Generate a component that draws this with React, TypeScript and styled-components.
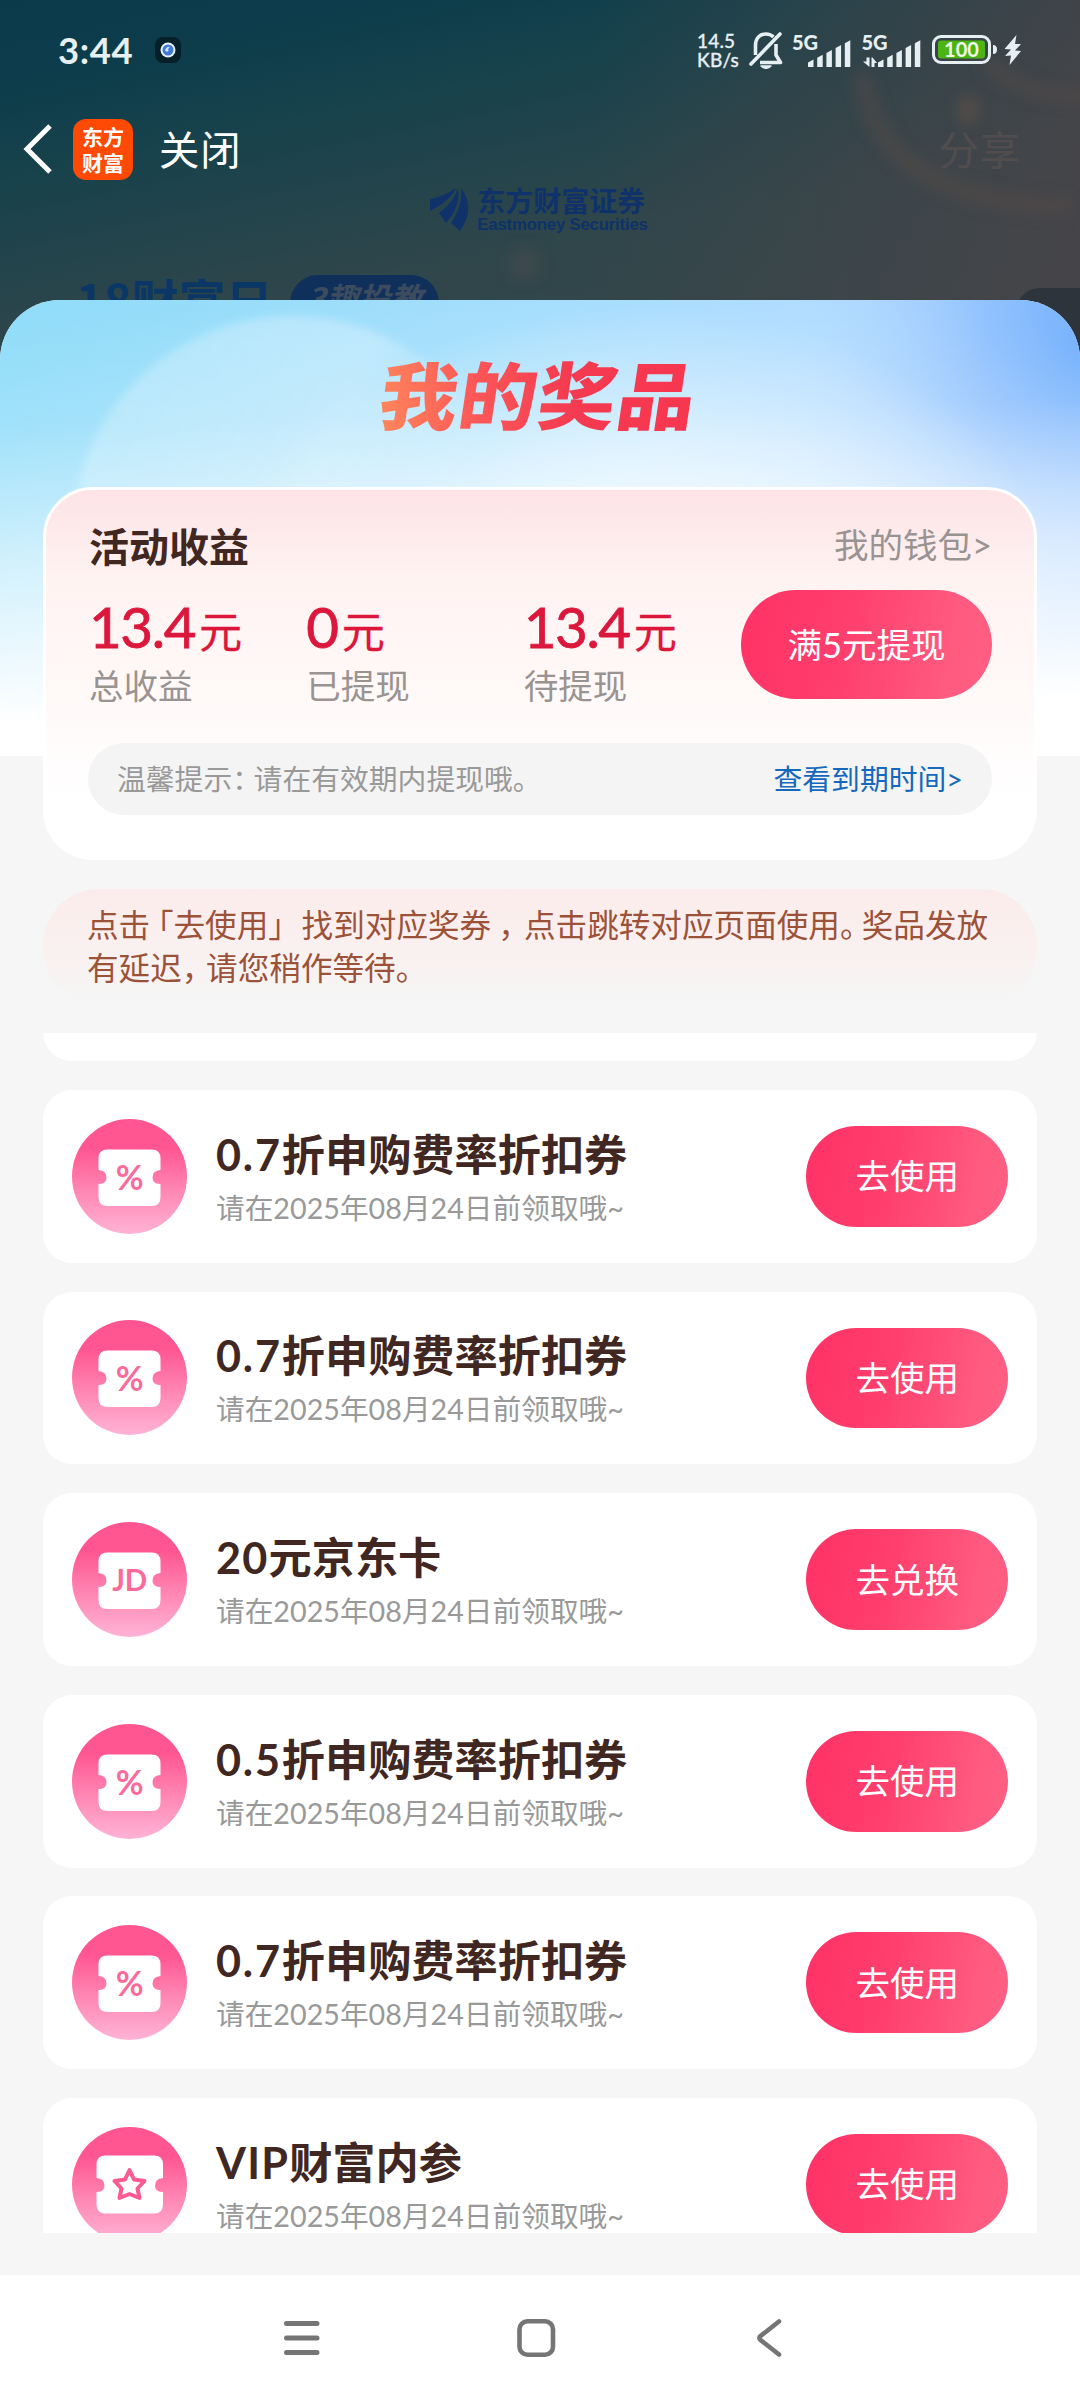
import React from 'react';
import styled, { createGlobalStyle } from 'styled-components';

const Global = createGlobalStyle`
  * { box-sizing: border-box; }
  body { margin: 0; background: #fff; }
`;

const Screen = styled.div`
  width: 1080px;
  height: 2400px;
  display: flex;
  flex-direction: column;
  overflow: hidden;
  font-family: Lato, 'Noto Sans CJK SC', sans-serif;
  background: #f6f6f6;
`;

/* ---------- dimmed page behind the sheet ---------- */

const Backdrop = styled.header`
  position: relative;
  height: 364px;
  flex: none;
  overflow: hidden;
  background:
    linear-gradient(90deg, rgba(75, 68, 72, 0) 55%, rgba(75, 68, 72, 0.75) 100%),
    linear-gradient(168deg, #0b3b4b 0%, #0d3d4b 15%, #17424c 30%, #24444b 46%, #2f464b 60%, #39464a 100%);
`;

const Swirl = styled.svg`
  position: absolute;
  inset: 0;
`;

const StatusBar = styled.div`
  position: relative;
  display: flex;
  align-items: center;
  justify-content: space-between;
  height: 100px;
  padding: 0 58px 0 58px;
  color: #e6eff2;
`;

const Group = styled.div<{ $gap: number }>`
  display: flex;
  align-items: center;
  gap: ${(p) => p.$gap}px;
`;

const Clock = styled.span`
  font-size: 36.5px;
  line-height: 40px;
  font-weight: 700;
  letter-spacing: 0.6px;
`;

const Recorder = styled.span`
  display: flex;
  align-items: center;
  justify-content: center;
  width: 26px;
  height: 26px;
  border-radius: 8px;
  background: #06202a;
`;

const TitleBar = styled.div`
  position: relative;
  display: flex;
  align-items: center;
  height: 84px;
  margin-top: 7px;
  padding: 0 59px 0 21px;
`;

const AppLogo = styled.div`
  display: flex;
  flex-direction: column;
  align-items: center;
  justify-content: center;
  width: 60px;
  height: 61px;
  margin: 0 26px 0 20px;
  border-radius: 13px;
  background: #fe4a05;
  color: #fff;
  font: 700 21px/26px 'Noto Sans CJK SC', sans-serif;
`;

const BarText = styled.span<{ $faint?: boolean }>`
  font-size: 40.3px;
  line-height: 56px;
  letter-spacing: 1px;
  padding-top: 2px;
  color: ${(p) => (p.$faint ? '#514d4f' : '#fff')};
  margin-left: ${(p) => (p.$faint ? 'auto' : '0')};
`;

const Brand = styled.div`
  position: relative;
  display: flex;
  justify-content: center;
  align-items: center;
  gap: 8px;
  height: 46px;
  margin-top: -5px;
  padding-right: 3px;
  color: #0e3269;
`;

const BrandName = styled.div`
  display: flex;
  flex-direction: column;
  font: 700 28px/31px 'Noto Sans CJK SC', sans-serif;
`;

const BrandLatin = styled.span`
  font: 700 16.8px/17px 'Liberation Sans', Arial, sans-serif;
  letter-spacing: -0.2px;
`;

const Promo = styled.div`
  position: relative;
  display: flex;
  align-items: flex-start;
  gap: 22px;
  margin-top: 41px;
  padding-left: 76px;
`;

const PromoTitle = styled.span`
  width: 192px;
  font: 700 47px/52px 'Noto Sans CJK SC', sans-serif;
  white-space: nowrap;
  color: #0a3766;
`;

const PromoPill = styled.span`
  width: 149px;
  height: 56px;
  margin-top: 2px;
  border-radius: 28px;
  background: #10305c;
  color: #3c4c5e;
  text-align: center;
  font: italic 700 32px/45px 'Noto Sans CJK SC', sans-serif;
`;

const SideTab = styled.span`
  position: absolute;
  right: 0;
  top: 288px;
  width: 64px;
  height: 90px;
  border-radius: 24px 0 0 0;
  background: #2d343c;
`;

/* ---------- sheet ---------- */

const Sheet = styled.main`
  position: relative;
  display: flex;
  flex-direction: column;
  height: 1975px;
  margin-top: -64px;
  flex: none;
  padding: 0 43px;
  border-radius: 60px 60px 0 0;
  overflow: hidden;
  background: #f6f6f6;
`;

const Sky = styled.svg`
  position: absolute;
  left: 0;
  top: 0;
`;

const SheetTitle = styled.h1`
  position: relative;
  align-self: center;
  margin: 40px 1px 0 0;
  height: 104px;
  font: 900 78px/104px 'Noto Sans CJK SC', sans-serif;
  letter-spacing: 1.2px;
  transform: scaleY(0.94) skewX(-8deg);
  background: linear-gradient(75deg, #ff8a5c 0%, #fb5657 32%, #f43a50 60%, #f8364f 100%);
  -webkit-background-clip: text;
  background-clip: text;
  color: transparent;
`;

const Earnings = styled.section`
  position: relative;
  flex: none;
  height: 373px;
  margin-top: 43px;
  padding: 13px 42px 0;
  border: 3px solid #fff;
  border-radius: 50px;
  background: linear-gradient(180deg, #fde3e6 0%, #fff3f2 25%, #fff8f7 52%, #fffdfd 75%, #fff 86%);
`;

const EarningsHead = styled.div`
  display: flex;
  justify-content: space-between;
  align-items: center;
  height: 84px;
  padding-left: 1px;
`;

const Heading = styled.h2`
  margin: 0;
  font-size: 40px;
  font-weight: 700;
  color: #412722;
`;

const Muted = styled.span`
  font-size: 34.5px;
  line-height: 46px;
  color: #999391;
`;

const Stats = styled.div`
  display: flex;
  height: 153px;
  margin-top: 3px;
  padding-left: 1px;
`;

const Stat = styled.div`
  display: flex;
  flex-direction: column;
  width: 217.6px;
`;

const Amount = styled.div`
  font-size: 56.5px;
  line-height: 72px;
  height: 73px;
  color: #dc173c;
  letter-spacing: -1.4px;
  white-space: nowrap;
  -webkit-text-stroke: 0.8px #dc173c;
  small {
    margin-left: 4px;
    font-size: 43.2px;
    font-weight: 400;
    -webkit-text-stroke: 0.3px #dc173c;
  }
`;

const PillButton = styled.button<{ $w: number; $h: number }>`
  display: flex;
  align-items: center;
  justify-content: center;
  flex: none;
  width: ${(p) => p.$w}px;
  height: ${(p) => p.$h}px;
  margin-left: auto;
  padding: 0;
  border: 0;
  border-radius: ${(p) => p.$h / 2}px;
  background: linear-gradient(100deg, #ff3166 0%, #ff3f6e 42%, #ff5a80 82%, #ff5f84 100%);
  color: #fff;
  font-family: inherit;
  font-size: 34.5px;
  line-height: 46px;
`;

const Tip = styled.div`
  display: flex;
  align-items: center;
  justify-content: space-between;
  height: 72px;
  padding: 0 29px 1px 29px;
  border-radius: 36px;
  background: #f4f4f4;
  color: #999;
  font-size: 28.8px;
  line-height: 40px;
`;

const TipLink = styled.span`
  color: #1468bd;
`;

const Mark = styled.span<{ $l?: number; $r?: number }>`
  font-feature-settings: 'halt';
  margin-left: ${(p) => p.$l ?? 0}px;
  margin-right: ${(p) => p.$r ?? 0}px;
`;

const Notice = styled.p`
  position: relative;
  flex: none;
  height: 115px;
  margin: 29px 0 0;
  padding: 15px 0 0 44px;
  border-radius: 56px;
  background: linear-gradient(180deg, #fbeceb 0%, #f9f0ef 50%, #f6f6f6 100%);
  color: #9c5238;
  font-size: 31.6px;
  line-height: 43px;
  white-space: nowrap;
`;

const PrizeList = styled.div`
  position: relative;
  display: flex;
  flex-direction: column;
  gap: 28.8px;
  height: 1200px;
  margin-top: 29px;
  overflow: hidden;
`;

const PrizeCard = styled.article`
  display: flex;
  align-items: center;
  flex: none;
  height: 172.8px;
  padding: 0 29px;
  border-radius: 29px;
  background: #fff;
`;

const ScrolledCard = styled(PrizeCard)`
  margin-top: -144.6px;
`;

const PrizeText = styled.div`
  display: flex;
  flex-direction: column;
  margin-left: 29px;
`;

const PrizeName = styled.h3`
  margin: 0;
  font-size: 43.2px;
  line-height: 58px;
  font-weight: 700;
  color: #412722;
`;

const Lead = styled.span<{ $decimal: boolean }>`
  letter-spacing: ${(p) => (p.$decimal ? 1.8 : 1.2)}px;
`;

const PrizeDate = styled.span`
  margin-top: 5px;
  font-size: 28.7px;
  line-height: 40px;
  color: #999;
`;

const SystemNav = styled.nav`
  display: flex;
  align-items: center;
  justify-content: center;
  gap: 194px;
  height: 125px;
  padding-right: 8px;
  background: #fff;
`;

/* ---------- icons ---------- */

const BellOff = () => (
  <svg width="34" height="38" viewBox="0 0 34 38" fill="none" stroke="#e6eff2" strokeWidth="3.6" strokeLinejoin="round">
    <path d="M2 33 L31 3" strokeLinecap="round" />
    <path d="M6.5 24 V14.5 C6.5 7 11 3 17 3 C20 3 22.500 4 24.500 6" />
    <path d="M27 13 V24 L31.500 31.500 H11" />
    <path d="M12 35 H22 Q17 39.500 12 35Z" fill="#e6eff2" strokeWidth="1.500" />
  </svg>
);

const SignalBox = styled.div`
  display: flex;
  width: 59px;
  height: 36px;
  align-items: flex-end;
`;

const Generation = styled.span`
  align-self: flex-start;
  width: 0;
  font: 900 20px/20px Lato, sans-serif;
  margin-left: -1px;
  margin-right: 1px;
  white-space: nowrap;
`;

const Bars = styled.svg`
  flex: none;
`;

const Signal = ({ arrows }: { arrows?: boolean }) => (
  <SignalBox>
    <Generation>5G</Generation>
    <Bars width="59" height="32" viewBox="0 0 59 32" fill="#e6eff2">
      {[0, 1, 2, 3, 4].map((i) => {
        const x = 15 + i * 9.2;
        const top = 24.5 - i * 4.8;
        return <path key={i} d={`M${x} ${top + 2} L${x + 5.5} ${top - 1} V31 H${x}Z`} />;
      })}
      {arrows && <path d="M3.500 21.500 H6.500 V31 L0 25.500 H3.500Z M8.500 21.500 V31 H11.500 V27 H14 L9.500 21.500Z" />}
    </Bars>
  </SignalBox>
);

const Battery = () => (
  <svg width="90" height="32" viewBox="0 0 90 32">
    <rect x="1.500" y="2.500" width="56" height="26" rx="7.500" fill="none" stroke="#e6eff2" strokeWidth="3" />
    <rect x="6" y="6.500" width="47" height="18" rx="3" fill="#4cb514" />
    <path d="M61 11 Q65 11 65 15.500 Q65 20 61 20Z" fill="#e6eff2" />
    <text x="29.500" y="22.500" textAnchor="middle" fontFamily="Lato, sans-serif" fontWeight="700" fontSize="20" fill="#f2fbe8">100</text>
    <path d="M84.500 1 L72.500 15 L79 15.500 L73 22 L79 21.500 L77.500 31 L89 17 L83 16.500 L89 10 L83 10Z" fill="#e6eff2" />
  </svg>
);

const Rate = styled.div`
  font: 500 19px/19px Lato, sans-serif;
  width: 41px;
  letter-spacing: 0.2px;
  white-space: nowrap;
  -webkit-text-stroke: 0.3px #e6eff2;
`;

const TicketIcon = ({ kind }: { kind: Kind }) => {
  const star = kind === 'star';
  const l = star ? 24.5 : 26.5;
  const r = star ? 91 : 88.5;
  const t = star ? 28.5 : 30.5;
  const b = star ? 86.5 : 87;
  const m = 58.5;
  const q = 9;
  return (
    <svg width="115" height="115" viewBox="0 0 115 115">
      <defs>
        <linearGradient id={`disc-${kind}`} x1="0" y1="0" x2="0" y2="1">
          <stop offset="0" stopColor="#ff5590" />
          <stop offset="0.25" stopColor="#ff5590" />
          <stop offset="0.65" stopColor="#ff8ab5" />
          <stop offset="1" stopColor="#ffb3d6" />
        </linearGradient>
      </defs>
      <circle cx="57.500" cy="57.500" r="57.500" fill={`url(#disc-${kind})`} />
      <path
        fill="#fff"
        d={`M${l + q} ${t} H${r - q} Q${r} ${t} ${r} ${t + q} V${m - 7.5} Q${r - 8} ${m - 7} ${r - 8} ${m} Q${r - 8} ${m + 7} ${r} ${m + 6.5} V${b - q} Q${r} ${b} ${r - q} ${b} H${l + q} Q${l} ${b} ${l} ${b - q} V${m + 6.5} Q${l + 8} ${m + 7} ${l + 8} ${m} Q${l + 8} ${m - 7} ${l} ${m - 7.5} V${t + q} Q${l} ${t} ${l + q} ${t}Z`}
      />
      {star ? (
        <path
          d="M57.500 43 L62 52.500 L72.500 54 L65.500 61.500 L67.500 71 L57.500 67 L47.500 71 L49.500 61.500 L42.500 54 L53 52.500Z"
          fill="none"
          stroke="#fb5b92"
          strokeWidth="4"
          strokeLinejoin="round"
        />
      ) : (
        <text
          x="57.700"
          y={kind === 'jd' ? 69 : 70.5}
          textAnchor="middle"
          fontFamily="Lato, sans-serif"
          fontWeight="700"
          fontSize={kind === 'jd' ? 29.5 : 34}
          fill="#fb6a9a"
        >
          {kind === 'jd' ? 'JD' : '%'}
        </text>
      )}
    </svg>
  );
};

type Kind = 'percent' | 'jd' | 'star';

const prizes: { kind: Kind; num: string; name: string; action: string }[] = [
  { kind: 'percent', num: '0.7', name: '折申购费率折扣券', action: '去使用' },
  { kind: 'percent', num: '0.7', name: '折申购费率折扣券', action: '去使用' },
  { kind: 'jd', num: '20', name: '元京东卡', action: '去兑换' },
  { kind: 'percent', num: '0.5', name: '折申购费率折扣券', action: '去使用' },
  { kind: 'percent', num: '0.7', name: '折申购费率折扣券', action: '去使用' },
  { kind: 'star', num: 'VIP', name: '财富内参', action: '去使用' },
];

const stats = [
  { value: '13.4', label: '总收益' },
  { value: '0', label: '已提现' },
  { value: '13.4', label: '待提现' },
];

export default function App() {
  return (
    <Screen>
      <Global />
      <Backdrop>
        <Swirl width="1080" height="364" viewBox="0 0 1080 364" fill="none">
          <defs>
            <filter id="soft" x="-30%" y="-30%" width="160%" height="160%">
              <feGaussianBlur stdDeviation="7" />
            </filter>
          </defs>
          <g filter="url(#soft)" opacity="0.5">
            <path d="M862 74 C872 150 925 203 1070 207" stroke="#574b47" strokeWidth="18" />
            <path d="M985 60 Q1020 98 1090 96" stroke="#574b47" strokeWidth="14" />
            <ellipse cx="968" cy="110" rx="11" ry="15" fill="#6b544a" />
            <circle cx="525" cy="264" r="16" fill="#4d4c50" />
          </g>
        </Swirl>
        <SideTab />
        <StatusBar>
          <Group $gap={22}>
            <Clock>3:44</Clock>
            <Recorder>
              <svg width="16" height="16" viewBox="0 0 16 16">
                <circle cx="8" cy="8" r="7.500" fill="#e8f0fb" />
                <circle cx="8" cy="8" r="5.500" fill="#4179d4" />
                <path d="M5 8 Q7 3.500 10 5 Q7.500 6.500 8.500 9 Q6 11 5 8Z" fill="#cfe0fa" />
              </svg>
            </Recorder>
          </Group>
          <Group $gap={10.5}>
            <Rate>14.5<br />KB/s</Rate>
            <BellOff />
            <Signal />
            <Signal arrows />
            <Battery />
          </Group>
        </StatusBar>
        <TitleBar>
          <svg width="32" height="52" viewBox="0 0 32 52" fill="none" stroke="#fff" strokeWidth="5">
            <path d="M29 3 L6 26 L29 49" />
          </svg>
          <AppLogo>
            <span>东方</span>
            <span>财富</span>
          </AppLogo>
          <BarText>关闭</BarText>
          <BarText $faint>分享</BarText>
        </TitleBar>
        <Brand>
          <svg width="40" height="46" viewBox="0 0 40 46" fill="#0e3269">
            <path d="M1 13 Q14 11 27 2 Q22 14 1 25Z" />
            <path d="M10 27 Q25 16 29 2 Q32 20 17 37Z" />
            <path d="M22 37 Q34 20 32 2 Q47 22 31 45Z" />
          </svg>
          <BrandName>
            东方财富证券
            <BrandLatin>Eastmoney Securities</BrandLatin>
          </BrandName>
        </Brand>
        <Promo>
          <PromoTitle>18财富日</PromoTitle>
          <PromoPill>3趣投教</PromoPill>
        </Promo>
      </Backdrop>

      <Sheet>
        <Sky width="1080" height="456" viewBox="0 0 1080 456">
          <defs>
            <linearGradient id="base" x1="0" y1="0" x2="1" y2="0">
              <stop offset="0" stopColor="#8fdcf9" />
              <stop offset="0.45" stopColor="#a3defc" />
              <stop offset="0.75" stopColor="#b0dcff" />
              <stop offset="1" stopColor="#98c8ff" />
            </linearGradient>
            <radialGradient id="blue" cx="1100" cy="50" r="290" gradientUnits="userSpaceOnUse">
              <stop offset="0" stopColor="#64a8fc" />
              <stop offset="0.4" stopColor="#86bafd" stopOpacity="0.75" />
              <stop offset="1" stopColor="#c4e0fe" stopOpacity="0" />
            </radialGradient>
            <linearGradient id="fade" x1="0.47" y1="0" x2="0.53" y2="1">
              <stop offset="0" stopColor="#fff" stopOpacity="0" />
              <stop offset="0.25" stopColor="#fff" stopOpacity="0.16" />
              <stop offset="0.55" stopColor="#fff" stopOpacity="0.6" />
              <stop offset="0.9" stopColor="#fff" stopOpacity="1" />
            </linearGradient>
            <radialGradient id="glow" cx="640" cy="300" r="420" gradientUnits="userSpaceOnUse" gradientTransform="translate(0 90) scale(1 0.7)">
              <stop offset="0" stopColor="#fff" stopOpacity="0.9" />
              <stop offset="0.5" stopColor="#fff" stopOpacity="0.5" />
              <stop offset="1" stopColor="#fff" stopOpacity="0" />
            </radialGradient>
            <linearGradient id="orb" x1="0" y1="0" x2="1" y2="0.4">
              <stop offset="0.1" stopColor="#fff" stopOpacity="0.25" />
              <stop offset="0.6" stopColor="#fff" stopOpacity="0.3" />
              <stop offset="0.9" stopColor="#fff" stopOpacity="0" />
            </linearGradient>
            <filter id="edge"><feGaussianBlur stdDeviation="4" /></filter>
          </defs>
          <rect width="1080" height="456" fill="url(#base)" />
          <rect width="1080" height="456" fill="url(#blue)" />
          <rect width="1080" height="456" fill="url(#fade)" />
          <rect width="1080" height="456" fill="url(#glow)" />
          <circle cx="292" cy="236" r="220" fill="url(#orb)" filter="url(#edge)" />
        </Sky>
        <SheetTitle>我的奖品</SheetTitle>

        <Earnings>
          <EarningsHead>
            <Heading>活动收益</Heading>
            <Muted>我的钱包&gt;</Muted>
          </EarningsHead>
          <Stats>
            {stats.map((s, i) => (
              <Stat key={i}>
                <Amount>{s.value}<small>元</small></Amount>
                <Muted>{s.label}</Muted>
              </Stat>
            ))}
            <PillButton $w={251} $h={109}>满5元提现</PillButton>
          </Stats>
          <Tip>
            <span>温馨提示<Mark $r={7}>：</Mark>请在有效期内提现哦。</span>
            <TipLink>查看到期时间&gt;</TipLink>
          </Tip>
        </Earnings>

        <Notice>
          点击<Mark $l={7.5}>「</Mark>去使用<Mark $r={17.5}>」</Mark>找到对应奖券
          <Mark $l={7} $r={10}>，</Mark>点击跳转对应页面使用<Mark $r={6}>。</Mark>奖品发放
          <br />
          有延迟<Mark $r={8.5}>，</Mark>请您稍作等待。
        </Notice>

        <PrizeList>
          <ScrolledCard />
          {prizes.map((p, i) => (
            <PrizeCard key={i}>
              <TicketIcon kind={p.kind} />
              <PrizeText>
                <PrizeName><Lead $decimal={p.num.includes('.')}>{p.num}</Lead>{p.name}</PrizeName>
                <PrizeDate>请在2025年08月24日前领取哦~</PrizeDate>
              </PrizeText>
              <PillButton $w={201.6} $h={100.8}>{p.action}</PillButton>
            </PrizeCard>
          ))}
        </PrizeList>
      </Sheet>

      <SystemNav>
        <svg width="40" height="40" viewBox="0 0 40 40" stroke="#757575" strokeWidth="5" strokeLinecap="round">
          <path d="M4.500 5.500 H35 M4.500 20 H35 M4.500 34.500 H35" />
        </svg>
        <svg width="40" height="40" viewBox="0 0 40 40" fill="none" stroke="#757575" strokeWidth="4.600">
          <rect x="3.500" y="3.300" width="33.500" height="33.500" rx="8" />
        </svg>
        <svg width="40" height="40" viewBox="0 0 40 40" fill="none" stroke="#757575" strokeWidth="4.600" strokeLinecap="round" strokeLinejoin="round">
          <path d="M29 3.500 L10.500 18 Q8.500 20 10.500 22 L29 36.500" />
        </svg>
      </SystemNav>
    </Screen>
  );
}
